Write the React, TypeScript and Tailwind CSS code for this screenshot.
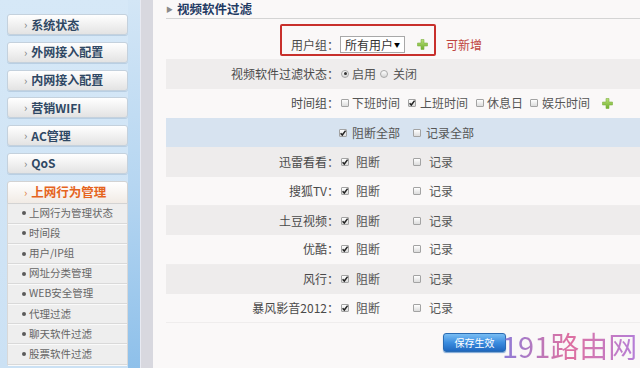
import type { ReactNode } from "react";

const font = { fontFamily: '"Noto Sans CJK SC", "Noto Sans", sans-serif' };

const menus = ["系统状态", "外网接入配置", "内网接入配置", "营销WIFI", "AC管理", "QoS"];

const subMenus = [
  "上网行为管理状态",
  "时间段",
  "用户/IP组",
  "网址分类管理",
  "WEB安全管理",
  "代理过滤",
  "聊天软件过滤",
  "股票软件过滤",
];

const apps = ["迅雷看看", "搜狐TV", "土豆视频", "优酷", "风行", "暴风影音2012"];

const CheckBox = ({ checked = false }: { checked?: boolean }) => (
  <span className="relative inline-block w-[8px] h-[8px] shrink-0 border border-[#a3a3a3] rounded-[1px] bg-gradient-to-b from-white to-[#dcdcdc]">
    {checked && (
      <svg className="absolute -left-[1px] -top-[1px]" width="8" height="8" viewBox="0 0 8 8">
        <path d="M1.6 4.2 L3.3 6 L6.6 1.6" fill="none" stroke="#222" strokeWidth="1.5" />
      </svg>
    )}
  </span>
);

const Radio = ({ checked = false }: { checked?: boolean }) => (
  <span className="inline-flex items-center justify-center w-[8px] h-[8px] shrink-0 rounded-full border border-[#a8a8a8] bg-gradient-to-b from-white to-[#d6d6d6]">
    {checked && <span className="w-[3px] h-[3px] rounded-full bg-[#333]" />}
  </span>
);

const GreenPlus = () => (
  <svg width="11" height="11" viewBox="0 0 11 11" className="shrink-0">
    <defs>
      <linearGradient id="gp" x1="0" y1="0" x2="0" y2="1">
        <stop offset="0" stopColor="#b9e07a" />
        <stop offset="1" stopColor="#6fae2c" />
      </linearGradient>
    </defs>
    <path
      d="M4 0.5 H7 V4 H10.5 V7 H7 V10.5 H4 V7 H0.5 V4 H4 Z"
      fill="url(#gp)"
      stroke="#7fb444"
      strokeWidth="0.6"
      strokeLinejoin="round"
    />
  </svg>
);

const Row = ({ label, bg = "", children }: { label?: string; bg?: string; children: ReactNode }) => (
  <div className={`flex items-center h-[29.33px] ${bg}`}>
    <div className="w-[173px] text-right text-[#4a4a4a]">{label ? `${label}：` : ""}</div>
    <div className="flex items-center text-[#555]">{children}</div>
  </div>
);

export default function App() {
  return (
    <div className="flex w-[640px] h-[368px] overflow-hidden text-[12px] leading-none" style={font}>
      {/* 左侧菜单 */}
      <aside className="w-[128px] shrink-0 bg-gradient-to-b from-[#d6e8f7] to-[#cbe1f4] pl-[7px] pt-[14px] flex flex-col gap-[6.8px]">
        {menus.map((m) => (
          <div
            key={m}
            className="h-[21px] flex items-center pl-[16px] rounded-[3px] border border-[#c4d1dd] bg-gradient-to-b from-white to-[#e3e3e3] shadow-[0_1px_0_#b9cfe3]"
          >
            <span className="text-[#7a7a7a] text-[11px] mr-[4px]">›</span>
            <span className="font-bold text-[#2f4864]">{m}</span>
          </div>
        ))}
        <div className="flex flex-col">
          <div className="h-[23px] flex items-center pl-[16px] rounded-t-[3px] border border-[#d3d3d3] bg-gradient-to-b from-white to-[#f1ebe5]">
            <span className="text-[#e0783a] text-[11px] mr-[4px]">›</span>
            <span className="font-bold text-[#e5641e] text-[12.5px]">上网行为管理</span>
          </div>
          <div className="bg-[#eeeeee] border-x border-[#d8d8d8]">
            {subMenus.map((s) => (
              <div
                key={s}
                className="h-[20.1px] flex items-center pl-[14px] border-b border-[#d9d9d9] shadow-[0_1px_0_#fafafa] text-[10.5px] text-[#666]"
              >
                <span className="w-[4px] h-[4px] rounded-full bg-[#5a5a5a] mr-[3px]" />
                {s}
              </div>
            ))}
          </div>
        </div>
      </aside>
      <div className="w-[12px] shrink-0 bg-gradient-to-b from-[#d3e6f6] via-[#b6d6f1] to-[#8ec0ea]" />
      <div className="w-[13px] shrink-0 bg-[#d8d8df] border-l border-[#e8eaf2]" />

      {/* 内容 */}
      <main className="relative flex-1 bg-[#faf8f8]">
        <div className="ml-[13px] h-[19px] flex items-center border-b border-[#d4d4d4]">
          <span className="text-[7px] text-[#8a8a8a] mr-[4px]">▶</span>
          <span className="font-bold text-[#1f3a63] text-[12.5px]">视频软件过滤</span>
        </div>

        <div className="ml-[13px] mt-[11px]">
          <Row label="用户组">
            <div className="ml-[1px] w-[65px] h-[17px] flex items-center justify-between px-[4px] border border-[#a8a8a8] bg-white text-[#333]">
              <span>所有用户</span>
              <span className="text-[6px] text-black">▼</span>
            </div>
            <span className="ml-[12px]">
              <GreenPlus />
            </span>
            <span className="ml-[18px] text-[#c0463f]">可新增</span>
          </Row>
          <Row label="视频软件过滤状态" bg="bg-[#efeded]">
            <span className="ml-[2px]" />
            <Radio checked />
            <span className="ml-[3px]">启用</span>
            <span className="ml-[4px]" />
            <Radio />
            <span className="ml-[5px]">关闭</span>
          </Row>
          <Row label="时间组">
            <span className="ml-[2px]" />
            <CheckBox />
            <span className="ml-[3px]">下班时间</span>
            <span className="ml-[8px]" />
            <CheckBox checked />
            <span className="ml-[4px]">上班时间</span>
            <span className="ml-[8px]" />
            <CheckBox />
            <span className="ml-[3px]">休息日</span>
            <span className="ml-[7px]" />
            <CheckBox />
            <span className="ml-[4px]">娱乐时间</span>
            <span className="ml-[12px]">
              <GreenPlus />
            </span>
          </Row>
          <Row bg="bg-[#d7e3f0]">
            <CheckBox checked />
            <span className="ml-[5px]">阻断全部</span>
            <span className="ml-[13px]" />
            <CheckBox />
            <span className="ml-[5px]">记录全部</span>
          </Row>
          {apps.map((a, i) => (
            <Row key={a} label={a} bg={i % 2 === 0 ? "bg-[#eeecec]" : "border-b border-[#efeded]"}>
              <span className="ml-[2px]" />
              <CheckBox checked />
              <span className="ml-[7px]">阻断</span>
              <span className="ml-[33px]" />
              <CheckBox />
              <span className="ml-[8px]">记录</span>
            </Row>
          ))}
          <div className="mt-[10px] ml-[277px] w-[63px] h-[19px] flex items-center justify-center rounded-[3px] border border-[#2b6cb3] bg-gradient-to-b from-[#79bdf3] via-[#3c8ee0] to-[#1f68c0] text-[10px] text-white shadow-[0_1px_1px_#7aa6d6]">
            保存生效
          </div>
        </div>

        {/* 红框标注 */}
        <div className="absolute left-[127px] top-[24px] w-[156px] h-[32px] border-2 border-[#c8302c] rounded-[2px]" />

        {/* 水印 */}
        <div className="absolute left-[349px] top-[331px] whitespace-nowrap text-[29px] leading-none bg-gradient-to-r from-[#8c7bd8] via-[#de6fa0] to-[#b47ed8] bg-clip-text text-transparent">
          191路由网
        </div>
      </main>
    </div>
  );
}
